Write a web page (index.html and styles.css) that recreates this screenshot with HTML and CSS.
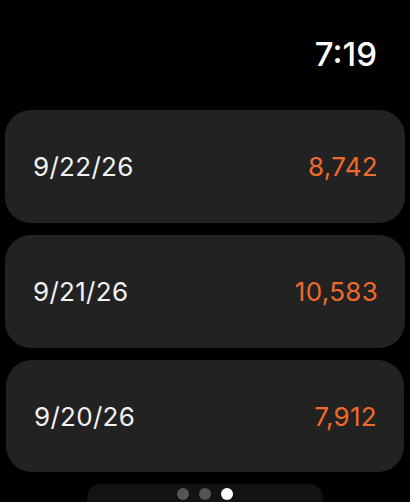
FILE: index.html
```
<!DOCTYPE html>
<html>
	<head>
		<meta charset="utf-8" />
		<link rel="stylesheet" href="styles.css">
		<title>steps</title>
	</head>
	<body>
		<div id="watch">
			<div class="hd">
				<span class="time">7:19</span>
			</div>
			<div class="list">
				<div class="row">
					<span class="date">9/22/26</span>
					<span class="steps">8,742</span>
				</div>
				<div class="row">
					<span class="date">9/21/26</span>
					<span class="steps">10,583</span>
				</div>
				<div class="row row-last">
					<span class="date">9/20/26</span>
					<span class="steps">7,912</span>
				</div>
			</div>
			<div class="pager">
				<span class="dot"></span>
				<span class="dot"></span>
				<span class="dot on"></span>
			</div>
		</div>
	</body>
</html>
```
FILE: styles.css
```
body,html{
	background-color:#000;
	font-family:Inter, Roboto, "Liberation Sans", sans-serif;
	color:#f2f2f2;
}
body,html,div{
	padding:0;
	margin:0;
}
#watch{
	width:410px;
	height:502px;
	overflow:hidden;
}
.hd{
	height:110px;
	display:flex;
	justify-content:flex-end;
	box-sizing:border-box;
	padding:34px 33px 0 0;
}
.time{
	font-size:33px;
	line-height:40px;
	font-weight:500;
	color:#fff;
}
.list{
	display:flex;
	flex-direction:column;
	gap:12px;
	padding:0 5px 0 5px;
}
.row{
	height:113px;
	box-sizing:border-box;
	background-color:#222;
	border-radius:26px;
	display:flex;
	align-items:center;
	justify-content:space-between;
	padding:0 27px 0 28px;
	font-size:26px;
	letter-spacing:0.3px;
}
.row-last{
	height:112px;
	margin:0 1px;
}
.steps{
	color:#ef6a2b;
}
.pager{
	width:236px;
	height:40px;
	margin:12px auto 0;
	background-color:#121212;
	border-radius:14px;
	display:flex;
	justify-content:center;
	gap:10px;
	padding-top:4px;
	box-sizing:border-box;
}
.dot{
	width:12px;
	height:12px;
	border-radius:50%;
	background-color:#555;
}
.dot.on{
	background-color:#fff;
}
```
